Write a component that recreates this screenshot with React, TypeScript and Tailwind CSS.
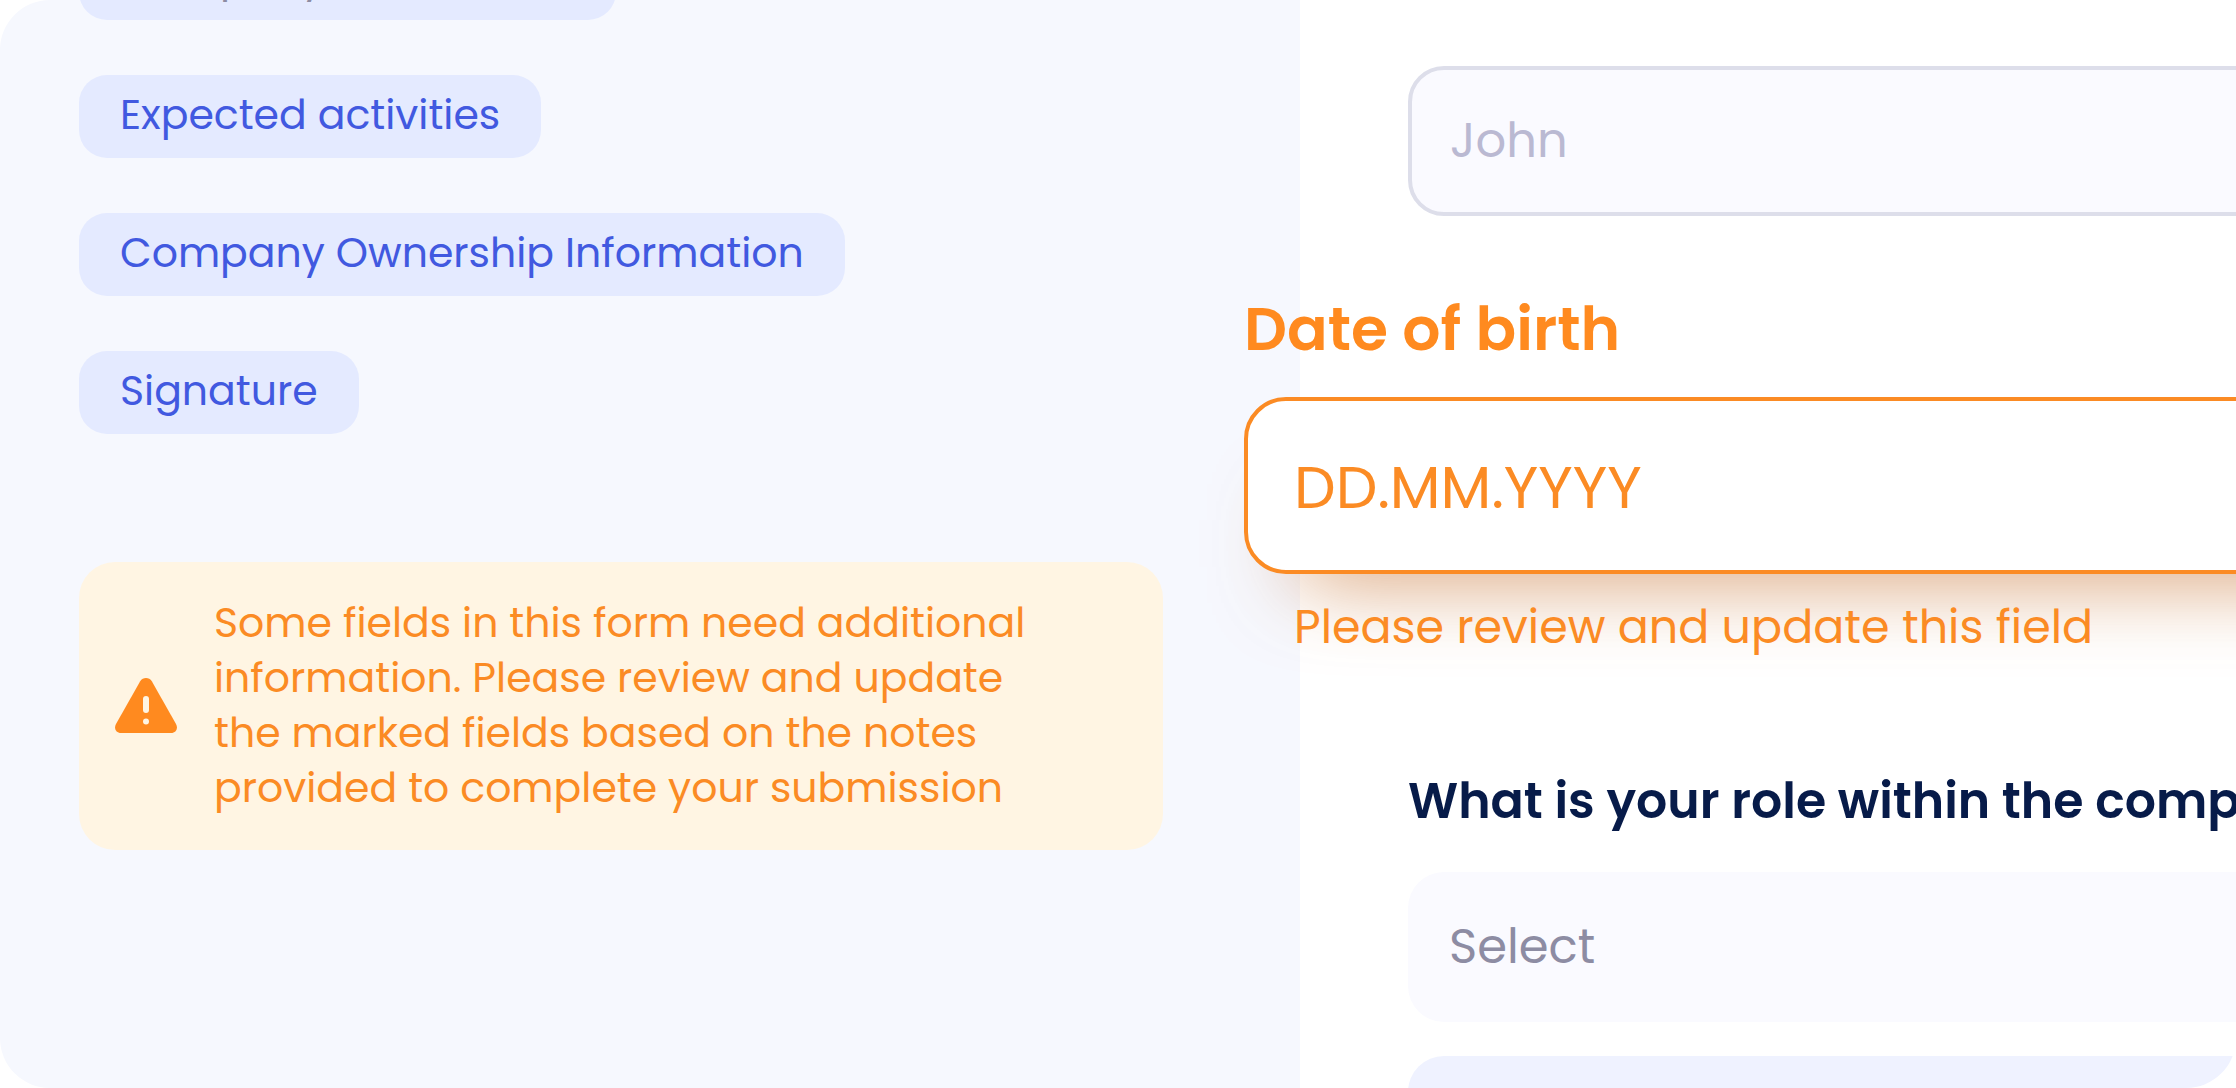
import React from 'react';

type Step = {
  label: string;
  muted?: boolean;
};

const steps: Step[] = [
  { label: 'Company Information', muted: true },
  { label: 'Expected activities' },
  { label: 'Company Ownership Information' },
  { label: 'Signature' }
];

const StepLink: React.FC<Step> = ({ label, muted }) => {
  return (
    <a
      href="#"
      className={`flex h-[83px] items-center rounded-[28px] bg-[#e4eaff] px-[41px] pb-1 text-[41px] leading-[52px] whitespace-nowrap ${
        muted ? 'text-[#8d8ca3]' : 'text-[#4159e0]'
      }`}
    >
      {label}
    </a>
  );
};

const WarningIcon: React.FC = () => {
  return (
    <svg viewBox="0 0 62 55" className="h-[55px] w-[62px] shrink-0" aria-hidden="true">
      <path
        d="M25.2 3.2C27.8 -1 34.2 -1 36.8 3.2L61 46C63.4 50.5 61 55 56 55H6C1 55 -1.4 50.5 1 46Z"
        fill="#ff8a1f"
      />
      <rect x="28" y="18" width="6" height="17" rx="3" fill="#fff5e3" />
      <circle cx="31" cy="43.5" r="3" fill="#fff5e3" />
    </svg>
  );
};

const Sidebar: React.FC = () => {
  return (
    <aside className="bg-[#f6f8fe] pr-[137px] pl-[79px]">
      <nav className="-mt-[63px] flex flex-col items-start gap-[55px]">
        {steps.map((step) => (
          <StepLink key={step.label} {...step} />
        ))}
      </nav>

      <div
        role="alert"
        className="mt-32 flex items-center gap-[37px] rounded-[36px] bg-[#fff5e3] pt-[33px] pb-[35px] pl-9 text-[41px] leading-[55px] whitespace-nowrap text-[#fb8b24]"
      >
        <WarningIcon />
        <p>
          Some fields in this form need additional
          <br />
          information. Please review and update
          <br />
          the marked fields based on the notes
          <br />
          provided to complete your submission
        </p>
      </div>
    </aside>
  );
};

const Form: React.FC = () => {
  return (
    <form className="min-w-0 pt-[66px] pl-[108px]">
      <div className="-mr-60">
        <input
          type="text"
          aria-label="First name"
          placeholder="John"
          className="block h-[150px] w-full rounded-[36px] border-4 border-[#dddeea] bg-[#fafaff] px-[38px] text-[48px] outline-none placeholder:text-[#bab9d2]"
        />
      </div>

      <div className="relative mt-[82px] -mr-60 -ml-[164px] text-[#ff8a1f]">
        <label htmlFor="birth-date" className="block text-[60px] leading-[62px] font-semibold">
          Date of birth
        </label>
        <input
          id="birth-date"
          type="text"
          placeholder="DD.MM.YYYY"
          aria-describedby="birth-date-note"
          className="mt-[37px] block h-[177px] w-full rounded-[42px] border-4 border-[#fb8b24] bg-white px-[46px] pt-1 text-[59px] shadow-[0_58px_84px_-56px_rgba(196,108,40,0.75)] outline-none placeholder:text-[#fb8b24]"
        />
        <p id="birth-date-note" className="relative mt-[25px] pl-[50px] text-[46px] leading-[56px] text-[#fb8b24]">
          Please review and update this field
        </p>
      </div>

      <div className="mt-[118px] -mr-60">
        <label
          htmlFor="role"
          className="block text-[49px] leading-[56px] font-semibold whitespace-nowrap text-[#071b49]"
        >
          What is your role within the company?
        </label>
        <select
          id="role"
          className="mt-[43px] block h-[150px] w-full appearance-none rounded-[36px] bg-[#fafaff] px-[41px] text-[48px] text-[#8d8ca3] outline-none"
        >
          <option>Select</option>
        </select>
        <div className="mt-[34px] h-[150px] rounded-[36px] bg-[#eff2ff]" />
      </div>
    </form>
  );
};

const App: React.FC = () => {
  return (
    <div className="h-screen bg-white font-['Poppins',Inter,sans-serif]">
      <main className="grid h-full grid-cols-[1300fr_936fr] overflow-hidden rounded-[50px] bg-white">
        <Sidebar />
        <Form />
      </main>
    </div>
  );
};

export default App;
